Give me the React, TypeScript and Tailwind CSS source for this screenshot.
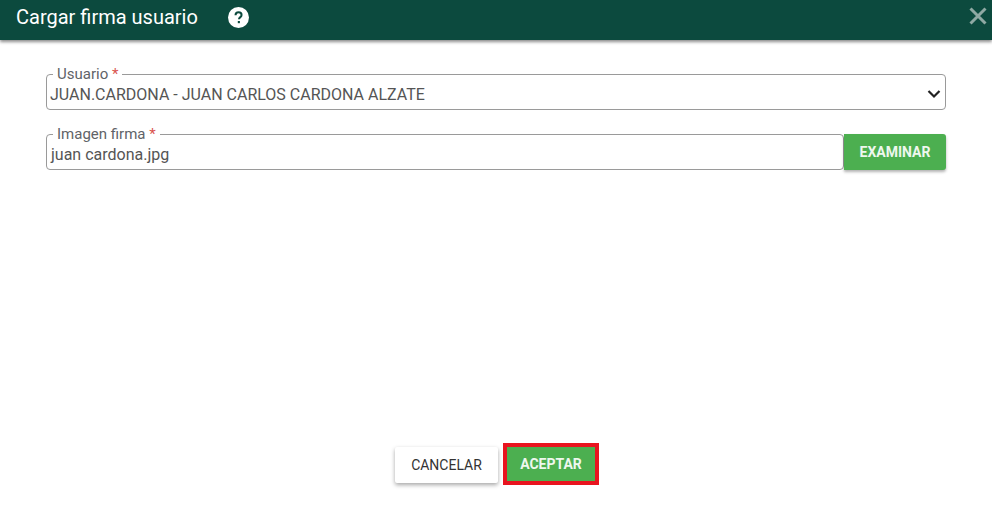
import React from 'react';

const font = { fontFamily: 'Roboto, sans-serif' };

function Field({ label, children }: { label: string; children: React.ReactNode }) {
  return (
    <fieldset className="flex-1 h-[43px] border border-[#9a9a9a] rounded-[4px] pl-[3px] min-w-0">
      <legend className="ml-[3px] px-[4px] text-[15px] leading-[14px] text-[#5f6368]">
        {label} <span className="text-[#d9534f]">*</span>
      </legend>
      {children}
    </fieldset>
  );
}

export default function App() {
  return (
    <div className="w-[992px] h-[514px] bg-white flex flex-col overflow-hidden" style={font}>
      {/* Header */}
      <div className="h-[40px] shrink-0 bg-[#0c4a3e] shadow-[0_2px_3px_rgba(0,0,0,0.45)] flex items-center pl-[16px] pr-[4px] pb-[6px]">
        <span className="text-[20px] text-white leading-none">Cargar firma usuario</span>
        <svg className="ml-[30px]" width="21" height="21" viewBox="0 0 24 24">
          <circle cx="12" cy="12" r="12" fill="#fff" />
          <path d="M8.6 9.4c0-2 1.5-3.3 3.5-3.3s3.4 1.2 3.4 3c0 1.4-.8 2.1-1.7 2.8-.8.6-1.2 1.1-1.2 2.2" fill="none" stroke="#0c4a3e" strokeWidth="2.3" />
          <rect x="11.2" y="16" width="2.4" height="2.5" fill="#0c4a3e" />
        </svg>
        <svg className="ml-auto mb-[3px]" width="20" height="20" viewBox="0 0 20 20">
          <path d="M2.5 2.5l15 15M17.5 2.5l-15 15" stroke="#8fa9a3" strokeWidth="3" fill="none" />
        </svg>
      </div>

      {/* Form */}
      <div className="flex flex-col gap-[17px] px-[46px] pt-[27px]">
        <div className="flex">
          <Field label="Usuario">
            <div className="flex items-center h-[22px] mt-[3px] pr-[4px]">
              <select className="flex-1 appearance-none text-[16px] leading-[22px] text-[#555] outline-none bg-white">
                <option>JUAN.CARDONA - JUAN CARLOS CARDONA ALZATE</option>
              </select>
              <svg className="-mt-[2px]" width="14" height="14" viewBox="0 0 14 14">
                <path d="M1.5 4l5.5 5.5L12.5 4" fill="none" stroke="#222" strokeWidth="2.2" />
              </svg>
            </div>
          </Field>
        </div>
        <div className="flex items-end">
          <Field label="Imagen firma">
            <div className="h-[22px] mt-[3px] pl-[1px] text-[16px] leading-[22px] text-[#555]">juan cardona.jpg</div>
          </Field>
          <button className="w-[102px] h-[36px] bg-[#4caf50] text-[#eef7ee] text-[14px] font-bold rounded-r-[3px] shadow-[0_2px_3px_rgba(0,0,0,0.3)]">
            EXAMINAR
          </button>
        </div>
      </div>

      {/* Footer */}
      <div className="mt-[273px] flex justify-center items-start gap-[5px] pl-[2px]">
        <button className="mt-[4px] w-[103px] h-[36px] bg-white text-[#333] text-[14px] rounded-[2px] shadow-[0_2px_4px_rgba(0,0,0,0.35)]">
          CANCELAR
        </button>
        <div className="border-[4px] border-[#e8141f]">
          <button className="block w-[88px] h-[34px] bg-[#4caf50] text-[#eef7ee] text-[14px] font-bold">
            ACEPTAR
          </button>
        </div>
      </div>
    </div>
  );
}
